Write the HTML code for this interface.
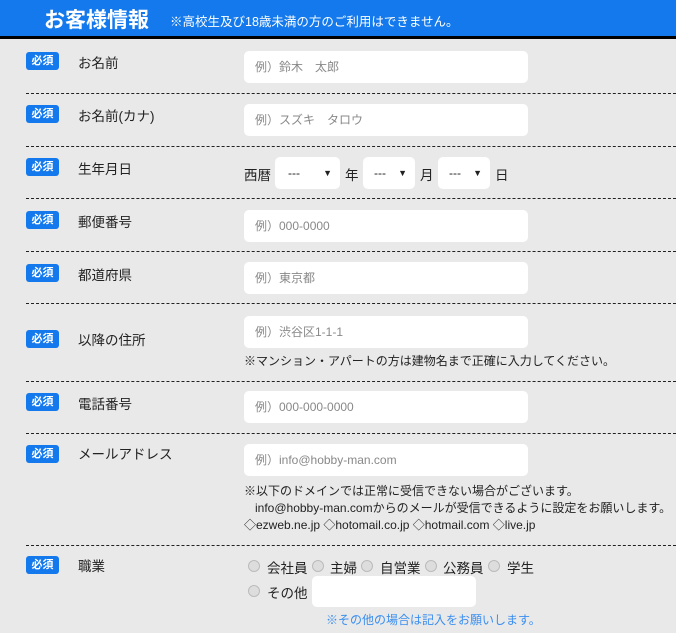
<!DOCTYPE html><html><head><meta charset="utf-8"><style>
*{margin:0;padding:0;box-sizing:border-box}
body{width:676px;height:633px;background:#e9e9e9;font-family:"Liberation Sans","Noto Sans CJK JP",sans-serif;position:relative;overflow:hidden;color:#222;font-size:14px}
.hd{position:absolute;left:0;top:0;width:676px;background:#1479ec;border-bottom:3px solid #000;height:39px}
.hd b{position:absolute;left:44px;top:4px;color:#fff;font-size:21px}
.hd span{position:absolute;left:170px;top:11px;color:#fff;font-size:12.5px}
.bg{position:absolute;left:26px;width:33px;height:18px;background:#1479ec;border-radius:3px;color:#fff;font-size:11px;font-weight:bold;text-align:center;line-height:18px}
.lb{position:absolute;left:78px;font-size:13.5px}
.in{position:absolute;left:244px;width:284px;height:32px;background:#fff;border-radius:5px;color:#888;font-size:12px;line-height:32px;padding-left:11px}
.dl{position:absolute;left:26px;right:0;border-top:1px dashed #222}
.sel{position:absolute;top:157px;height:32px;background:#fff;border-radius:5px;font-size:12px;line-height:32px}
.sel i{position:absolute;right:8px;font-style:normal;font-size:9px}
.t{position:absolute;font-size:12px;white-space:nowrap}
.r{position:absolute;width:12px;height:12px;border-radius:50%;border:1px solid #bbb;background:#ddd}
</style></head><body>
<div class="hd"><b>お客様情報</b><span>※高校生及び18歳未満の方のご利用はできません。</span></div>

<div class="bg" style="top:52px">必須</div><div class="lb" style="top:52px">お名前</div><div class="in" style="top:51px">例）鈴木　太郎</div>
<div class="dl" style="top:93px"></div>
<div class="bg" style="top:105px">必須</div><div class="lb" style="top:105px">お名前(カナ)</div><div class="in" style="top:104px">例）スズキ　タロウ</div>
<div class="dl" style="top:146px"></div>
<div class="bg" style="top:158px">必須</div><div class="lb" style="top:158px">生年月日</div>
<div class="t" style="left:244px;top:164px;font-size:13.5px">西暦</div>
<div class="sel" style="left:275px;width:65px;padding-left:13px">---<i>▼</i></div>
<div class="t" style="left:345px;top:164px;font-size:13.5px">年</div>
<div class="sel" style="left:363px;width:52px;padding-left:11px">---<i>▼</i></div>
<div class="t" style="left:420px;top:164px;font-size:13.5px">月</div>
<div class="sel" style="left:438px;width:52px;padding-left:11px">---<i>▼</i></div>
<div class="t" style="left:495px;top:164px;font-size:13.5px">日</div>
<div class="dl" style="top:198px"></div>
<div class="bg" style="top:211px">必須</div><div class="lb" style="top:211px">郵便番号</div><div class="in" style="top:210px">例）000-0000</div>
<div class="dl" style="top:251px"></div>
<div class="bg" style="top:264px">必須</div><div class="lb" style="top:264px">都道府県</div><div class="in" style="top:262px">例）東京都</div>
<div class="dl" style="top:303px"></div>
<div class="bg" style="top:330px">必須</div><div class="lb" style="top:329px">以降の住所</div><div class="in" style="top:316px">例）渋谷区1-1-1</div>
<div class="t" style="left:244px;top:352px">※マンション・アパートの方は建物名まで正確に入力してください。</div>
<div class="dl" style="top:381px"></div>
<div class="bg" style="top:393px">必須</div><div class="lb" style="top:393px">電話番号</div><div class="in" style="top:391px">例）000-000-0000</div>
<div class="dl" style="top:433px"></div>
<div class="bg" style="top:445px">必須</div><div class="lb" style="top:443px">メールアドレス</div><div class="in" style="top:444px">例）info@hobby-man.com</div>
<div class="t" style="left:244px;top:482px">※以下のドメインでは正常に受信できない場合がございます。</div>
<div class="t" style="left:255px;top:499px">info@hobby-man.comからのメールが受信できるように設定をお願いします。</div>
<div class="t" style="left:244px;top:516px">◇ezweb.ne.jp ◇hotomail.co.jp ◇hotmail.com ◇live.jp</div>
<div class="dl" style="top:545px"></div>
<div class="bg" style="top:556px">必須</div><div class="lb" style="top:555px">職業</div>
<div class="r" style="left:248px;top:560px"></div><div class="t" style="left:267px;top:557px;font-size:13.5px">会社員</div>
<div class="r" style="left:312px;top:560px"></div><div class="t" style="left:330px;top:557px;font-size:13.5px">主婦</div>
<div class="r" style="left:361px;top:560px"></div><div class="t" style="left:380px;top:557px;font-size:13.5px">自営業</div>
<div class="r" style="left:425px;top:560px"></div><div class="t" style="left:443px;top:557px;font-size:13.5px">公務員</div>
<div class="r" style="left:488px;top:560px"></div><div class="t" style="left:507px;top:557px;font-size:13.5px">学生</div>
<div class="r" style="left:248px;top:585px"></div><div class="t" style="left:267px;top:582px;font-size:13.5px">その他</div>
<div class="in" style="left:312px;top:576px;width:164px;height:31px"></div>
<div class="t" style="left:326px;top:611px;color:#3a8ef0">※その他の場合は記入をお願いします。</div>
</body></html>
